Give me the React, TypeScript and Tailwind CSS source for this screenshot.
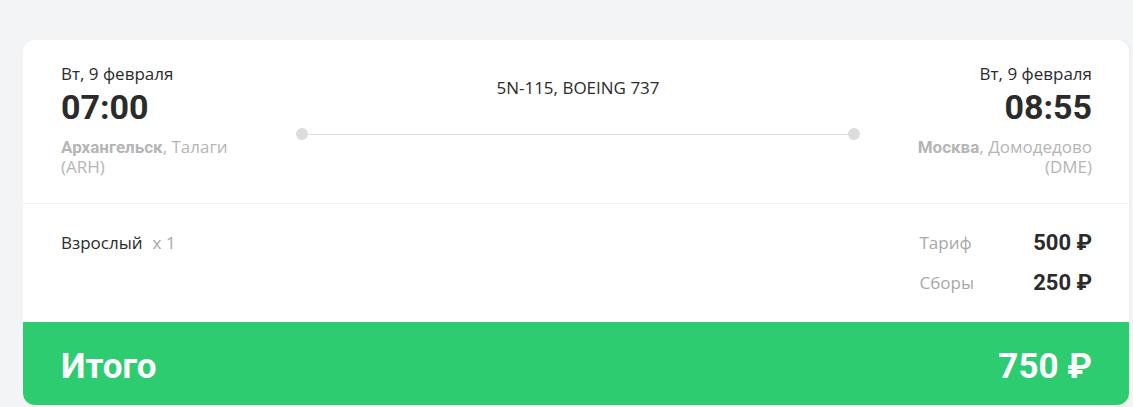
import React from "react";

export default function App() {
  return (
    <div className="min-h-[407px] w-full bg-[#f3f4f6] pt-[40px] pl-[23px] pr-[4px]" style={{ fontFamily: "'Open Sans', 'Noto Sans', sans-serif" }}>
      <div className="flex flex-col overflow-hidden rounded-[12px] bg-white shadow-[1px_0_2px_rgba(0,0,0,0.04)]">
        {/* top */}
        <div className="flex h-[164px] border-b border-[#f0f0f0] pl-[38px] pr-[37px] pt-[23px]">
          <div className="flex w-[235px] flex-col">
            <div className="text-[17px] leading-[22px] text-[#2b2b2b]">Вт, 9 февраля</div>
            <div className="mt-[2px] text-[34px] font-bold leading-[40px] text-[#2b2b2b]" style={{ fontFamily: "Roboto, sans-serif" }}>07:00</div>
            <div className="mt-[10px] text-[17px] text-[#b5b5b5]">
              <div className="leading-[20px]">
                <span className="font-bold" style={{ fontFamily: "Roboto, sans-serif" }}>Архангельск</span>, Талаги
              </div>
              <div className="leading-[20px]">(ARH)</div>
            </div>
          </div>
          <div className="flex flex-1 flex-col items-center">
            <div className="mt-[14px] text-[17px] leading-[22px] text-[#2b2b2b]">5N-115, BOEING 737</div>
            <div className="mt-[29px] flex w-full items-center">
              <div className="h-[12px] w-[12px] rounded-full bg-[#dcdcde]" />
              <div className="h-px flex-1 bg-[#dcdcdc]" />
              <div className="h-[12px] w-[12px] rounded-full bg-[#dcdcde]" />
            </div>
          </div>
          <div className="flex w-[232px] flex-col items-end text-right">
            <div className="text-[17px] leading-[22px] text-[#2b2b2b]">Вт, 9 февраля</div>
            <div className="mt-[2px] text-[34px] font-bold leading-[40px] text-[#2b2b2b]" style={{ fontFamily: "Roboto, sans-serif" }}>08:55</div>
            <div className="mt-[10px] text-[17px] text-[#b5b5b5]">
              <div className="leading-[20px]">
                <span className="font-bold" style={{ fontFamily: "Roboto, sans-serif" }}>Москва</span>, Домодедово
              </div>
              <div className="leading-[20px]">(DME)</div>
            </div>
          </div>
        </div>
        {/* middle */}
        <div className="flex h-[118px] items-start justify-between pl-[38px] pr-[37px] pt-[28px]">
          <div className="text-[17px] leading-[22px] text-[#2b2b2b]">
            Взрослый<span className="ml-[10px] text-[#a8a8a8]">x 1</span>
          </div>
          <div className="grid grid-cols-[auto_118px] content-start gap-y-[18px]">
            <div className="text-[17px] leading-[22px] text-[#a8a8a8]">Тариф</div>
            <div className="text-right text-[22px] font-bold leading-[22px] text-[#2b2b2b]" style={{ fontFamily: "Roboto, sans-serif" }}>500 ₽</div>
            <div className="text-[17px] leading-[22px] text-[#a8a8a8]">Сборы</div>
            <div className="text-right text-[22px] font-bold leading-[22px] text-[#2b2b2b]" style={{ fontFamily: "Roboto, sans-serif" }}>250 ₽</div>
          </div>
        </div>
        {/* total */}
        <div className="flex h-[83px] items-center justify-between bg-[#2ecc71] pl-[38px] pr-[37px] pt-[6px] text-white" style={{ fontFamily: "Roboto, sans-serif" }}>
          <div className="text-[35px] font-bold leading-[40px]">Итого</div>
          <div className="text-[35px] font-bold leading-[40px]">750 ₽</div>
        </div>
      </div>
    </div>
  );
}
